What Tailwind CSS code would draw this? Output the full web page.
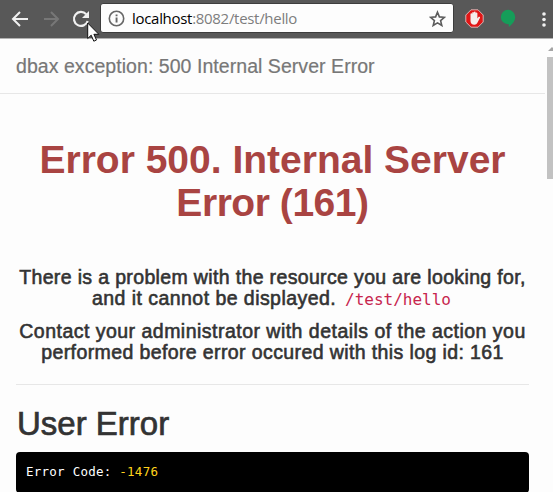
<!DOCTYPE html>
<html lang="en">
<head>
<meta charset="utf-8">
<title>dbax exception</title>
<script src="https://cdn.jsdelivr.net/npm/@tailwindcss/browser@4"></script>
</head>
<body class="h-[492px] w-[553px] overflow-hidden bg-[#fdfdfd] font-['Liberation_Sans',Arial,sans-serif] text-[#333]">
<div class="flex h-[492px] flex-col">
  <header class="relative flex h-[39px] shrink-0 items-start border-b border-[#b2b2b2] bg-[#585858]">
    <svg class="mt-[10px] ml-[11px] h-[18px] w-[18px] shrink-0" viewBox="0 0 18 18" fill="none" stroke="#f1f1f1" stroke-width="2"><path d="M17 9H2.500M9 2L2 9l7 7"/></svg>
    <svg class="mt-[10px] ml-[14px] h-[18px] w-[18px] shrink-0" viewBox="0 0 18 18" fill="none" stroke="#777" stroke-width="2"><path d="M1 9h14.500M8 2l7 7-7 7"/></svg>
    <svg class="mt-[10px] ml-[11px] h-[18px] w-[18px] shrink-0" viewBox="0 0 18 18"><path d="M14.200 4.200A7 7 0 1 0 15.700 11" fill="none" stroke="#f1f1f1" stroke-width="2.200"/><path d="M17 1v7h-7z" fill="#f1f1f1"/></svg>
    <div class="mt-[3px] ml-[10px] flex h-[30px] w-[354px] shrink-0 items-center rounded-[3px] border border-[#3d3d3d] bg-[#fdfdfd]">
      <svg class="ml-[7px] h-[17px] w-[17px]" viewBox="0 0 17 17"><circle cx="8.500" cy="8.500" r="7.200" fill="none" stroke="#666" stroke-width="1.600"/><path d="M7.600 7.400h1.900v5H7.600zM7.600 4.400h1.900v1.800H7.600z" fill="#666"/></svg>
      <span class="ml-[7px] w-[297px] text-[15px] leading-[28px] font-['Open_Sans',sans-serif] tracking-[-0.3px] whitespace-nowrap text-[#7d7d7d]"><span class="text-black">localhost</span>:8082/test/hello</span>
      <svg class="h-[17px] w-[17px]" viewBox="0 0 17 17"><path d="M8.500 2.200l1.900 4.700 5 .4-3.800 3.300 1.200 4.900-4.300-2.600-4.300 2.600 1.200-4.900-3.800-3.300 5-.4z" fill="none" stroke="#5c5c5c" stroke-width="1.600"/></svg>
    </div>
    <svg class="mt-[9px] ml-[11px] h-[19px] w-[19px] shrink-0" viewBox="0 0 19 19"><path d="M6 .8h7L18.200 6v7L13 18.200H6L.8 13V6z" fill="#e11616" stroke="#d5b2b2"/><path d="M5.500 9V5.200c0-1.300 1.700-1.300 1.700 0V3.900c0-1.200 1.700-1.200 1.700 0v-.5c0-1.200 1.800-1.200 1.800 0v1c0-1.100 1.700-1.100 1.700 0V9.600l.9-1.300c.8-1 2.200-.3 1.600.7l-2.500 4.800c-.6 1.300-1.600 2-3 2-2.400 0-3.900-1.400-3.900-3.700z" fill="#f5eeec"/></svg>
    <svg class="mt-[9px] ml-[16px] h-[19px] w-[16px] shrink-0" viewBox="0 0 16 19"><path d="M8 .8a7.200 7.200 0 0 1 7.200 7.200c0 4-3 7.300-6.400 10V15.200H8A7.200 7.200 0 0 1 8 .8z" fill="#159d59"/></svg>
    <svg class="mt-[10px] ml-[24px] h-[19px] w-[10px] shrink-0" viewBox="0 0 10 19" fill="#f1f1f1"><circle cx="4" cy="4" r="1.800"/><circle cx="4" cy="9.500" r="1.800"/><circle cx="4" cy="15" r="1.800"/></svg>
    <svg class="absolute top-[22px] left-[87px] z-10 h-[21px] w-[13px]" viewBox="0 0 13 21"><path d="M.7 1v15.500l3.500-3.300 2.600 6 2.700-1.200-2.600-5.700h4.900z" fill="#fff" stroke="#111"/></svg>
  </header>
  <div class="flex min-h-0 flex-1">
    <div class="w-[545px] shrink-0">
      <div class="flex h-[55px] items-center border-b border-[#e7e7e7] pl-[16px]"><span class="text-[19.500px] leading-[24px] tracking-[0.050px] whitespace-nowrap text-[#777] [-webkit-text-stroke:0.2px_#777]">dbax exception: 500 Internal Server Error</span></div>
      <main class="pr-[16px] pl-[16px]">
        <h1 class="pt-[44px] text-center text-[39px] leading-[43px] font-bold whitespace-nowrap text-[#a94442]"><span class="block">Error 500. Internal Server</span><span class="block tracking-[-0.450px]">Error (161)</span></h1>
        <div class="mt-[43px] text-center text-[19.500px] leading-[21px] whitespace-nowrap [-webkit-text-stroke:0.6px_#333]">
          <p><span class="block tracking-[0.350px]">There is a problem with the resource you are looking for,</span><span class="block pr-[2px] tracking-[0.450px]">and it cannot be displayed. <code class="ml-[3px] text-[16px] leading-none tracking-normal font-['DejaVu_Sans_Mono',monospace] text-[#c7254e] [-webkit-text-stroke:0]">/test/hello</code></span></p>
          <p class="mt-[12px]"><span class="block tracking-[0.480px]">Contact your administrator with details of the action you</span><span class="block tracking-[0.390px]">performed before error occured with this log id: 161</span></p>
        </div>
        <hr class="mt-[21px] border-[#e7e7e7]">
        <h2 class="mt-[21px] pl-px text-[33px] leading-[36px] whitespace-nowrap [-webkit-text-stroke:0.7px_#333]">User Error</h2>
        <pre class="mt-[10px] h-[41px] rounded-[4px] bg-black px-[10px] pt-[11px] font-['DejaVu_Sans_Mono',monospace] text-[12.500px] leading-[18px] tracking-[0.250px] text-white">Error Code: <span class="text-[#ffd21c]">-1476</span></pre>
      </main>
    </div>
    <div class="w-[8px] shrink-0 overflow-hidden pl-[2px]">
      <svg class="ml-[1px] mt-[8px] h-[4px] w-[8px]" viewBox="0 0 8 4"><path d="M0 4l4-4 4 4z" fill="#a5a5a5"/></svg>
      <div class="mt-[6px] h-[122px] bg-[#c2c2c2]"></div>
    </div>
  </div>
</div>
</body>
</html>
